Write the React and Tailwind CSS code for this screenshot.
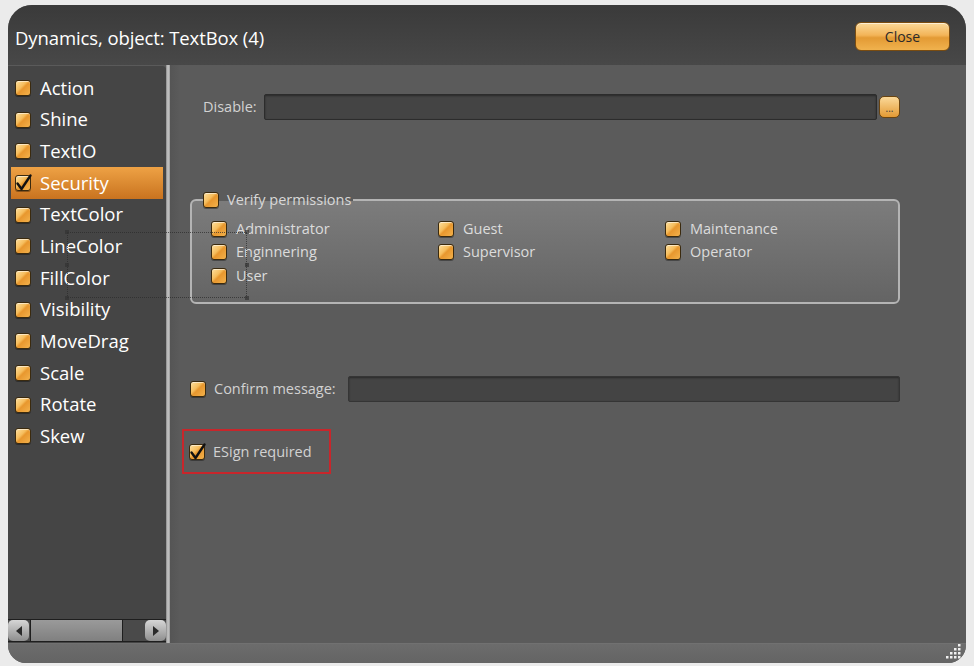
import React from 'react';

const sideItems = ['Action', 'Shine', 'TextIO', 'Security', 'TextColor', 'LineColor', 'FillColor', 'Visibility', 'MoveDrag', 'Scale', 'Rotate', 'Skew'];

const roles = ['Administrator', 'Guest', 'Maintenance', 'Enginnering', 'Supervisor', 'Operator', 'User'];

const Box = ({ checked }) => (
  <span className="relative inline-block w-[16px] h-[16px] shrink-0 rounded-[3px] border border-[#3b2a0e] bg-[linear-gradient(135deg,#fde0a0_0%,#f6bd5c_40%,#e8972e_52%,#f3b24c_100%)] shadow-[inset_0_1px_0_rgba(255,255,255,0.55),0_1px_0_rgba(0,0,0,0.35)]">
    {checked && (
      <svg className="absolute -left-[1px] -top-[3px]" width="18" height="19" viewBox="0 0 18 19">
        <path d="M2.5 10.5 L6.5 16 L15.5 2.5" fill="none" stroke="#111" strokeWidth="2.4" strokeLinecap="round" strokeLinejoin="round" />
      </svg>
    )}
  </span>
);

export default function App() {
  return (
    <div className="relative w-[974px] h-[666px] bg-[#ebebeb] pt-[5px] pl-[8px] pr-[8px] pb-[3px] font-['Open_Sans','Noto_Sans',sans-serif]">
      <div className="flex flex-col h-full rounded-[24px] rounded-b-[18px] overflow-hidden bg-[#5b5b5b]">
        {/* header */}
        <div className="h-[60px] shrink-0 flex items-center justify-between pl-[7px] pr-[16px] bg-[linear-gradient(180deg,#3a3a3a,#484848)]">
          <span className="text-white text-[18.5px] tracking-[-0.1px] mt-[5px]">Dynamics, object: TextBox (4)</span>
          <button className="w-[95px] h-[29px] mt-[3px] rounded-[6px] border border-[#7a4c10] bg-[linear-gradient(180deg,#fbd999_0%,#f3b458_45%,#e39a34_55%,#f0b24e_100%)] shadow-[inset_0_1px_0_rgba(255,255,255,0.6)] text-[14px] text-[#2a2a2a]">
            Close
          </button>
        </div>

        {/* body */}
        <div className="flex-1 flex min-h-0">
          <div className="w-[158px] shrink-0 flex flex-col bg-[#454545] border-t border-[#5a5a5a] rounded-tr-[4px]">
            <div className="flex-1 pt-[6px] px-[3px]">
              {sideItems.map((s) => (
                <div
                  key={s}
                  className={`h-[31.7px] flex items-center pl-[4px] gap-[9px] text-[18.5px] text-white ${s === 'Security' ? 'bg-[linear-gradient(180deg,#eea245,#c9731f)]' : ''}`}
                >
                  <Box checked={s === 'Security'} />
                  <span className="leading-none">{s}</span>
                </div>
              ))}
            </div>
            {/* horizontal scrollbar */}
            <div className="h-[23px] mb-[1px] flex items-stretch border-y border-[#1e1e1e] bg-[#4a4a4a]">
              <div className="w-[21px] flex items-center justify-center rounded-[5px] bg-[linear-gradient(180deg,#d6d6d6,#8e8e8e)]">
                <span className="w-0 h-0 border-y-[5px] border-y-transparent border-r-[6px] border-r-[#2a2a2a]" />
              </div>
              <div className="w-[93px] ml-[1px] bg-[linear-gradient(180deg,#9a9a9a,#808080)] border-x border-[#1e1e1e]" />
              <div className="flex-1" />
              <div className="w-[21px] flex items-center justify-center rounded-[5px] bg-[linear-gradient(180deg,#d6d6d6,#8e8e8e)]">
                <span className="w-0 h-0 border-y-[5px] border-y-transparent border-l-[6px] border-l-[#2a2a2a]" />
              </div>
            </div>
          </div>

          <div className="w-[4px] shrink-0 bg-[linear-gradient(90deg,#8a8a8a,#c8c8c8,#9a9a9a)]" />

          {/* content */}
          <div className="flex-1 flex flex-col bg-[linear-gradient(90deg,#555_0px,#5b5b5b_10px)] text-[14.5px] text-[#d2d2d2] pr-[66px]">
            <div className="mt-[29px] ml-[33px] flex items-center h-[26px]">
              <span className="mr-[7px]">Disable:</span>
              <div className="flex-1 h-[26px] rounded-[2px] bg-[#444] border border-[#2c2c2c] shadow-[inset_0_1px_2px_rgba(0,0,0,0.4)]" />
              <button className="ml-[2px] w-[21px] h-[22px] rounded-[5px] border border-[#6a4410] bg-[linear-gradient(180deg,#fbd999,#e39a34)] text-[10px] leading-none text-[#3a3a3a] flex items-end justify-center pb-[4px]">
                ...
              </button>
            </div>

            <fieldset className="mt-[69px] ml-[20px] rounded-[6px] border-2 border-[#b4b4b4] bg-[linear-gradient(180deg,#7c7c7c,#646464)] pl-[19px] pb-[15px] pt-[6px]">
              <legend className="-ml-[8px] flex items-center gap-[8px] pr-[2px]">
                <Box />
                <span className="text-[#d8d8d8]">Verify permissions</span>
              </legend>
              <div className="grid grid-cols-[227px_227px_1fr]">
                {roles.map((r) => (
                  <div key={r} className="h-[23.5px] flex items-center gap-[9px]">
                    <Box />
                    <span className="text-[#dcdcdc]">{r}</span>
                  </div>
                ))}
              </div>
            </fieldset>

            <div className="mt-[72px] ml-[20px] flex items-center h-[26px]">
              <Box />
              <span className="ml-[8px] w-[134px]">Confirm message:</span>
              <div className="flex-1 h-[26px] rounded-[2px] bg-[#444] border border-[#353535] shadow-[inset_0_1px_2px_rgba(0,0,0,0.4)]" />
            </div>

            <div className="mt-[27px] ml-[12px] w-[149px] h-[45px] border-2 border-[#c8262b] flex items-center pl-[5px] gap-[8px]">
              <Box checked />
              <span>ESign required</span>
            </div>
          </div>
        </div>

        {/* footer */}
        <div className="h-[20px] shrink-0 flex justify-end items-end pr-[4px] pb-[3px] bg-[linear-gradient(180deg,#6c6c6c,#646464)] border-t border-[#717171]">
          <svg width="16" height="16" viewBox="0 0 16 16">
            {[[12, 0], [8, 4], [12, 4], [4, 8], [8, 8], [12, 8], [0, 12], [4, 12], [8, 12], [12, 12]].map(([x, y]) => (
              <rect key={`${x}-${y}`} x={x} y={y} width="2.5" height="2.5" fill="#f0f0f0" />
            ))}
          </svg>
        </div>
      </div>

      {/* designer selection marquee left over the panel */}
      <div className="absolute left-[67px] top-[232px] w-[180px] h-[66px] border border-dotted border-[#2a2a2a]/70 pointer-events-none">
        <span className="absolute -left-[3px] -top-[3px] w-[4px] h-[4px] bg-[#333]/70" />
        <span className="absolute -right-[3px] -top-[3px] w-[4px] h-[4px] bg-[#333]/70" />
        <span className="absolute -left-[3px] -bottom-[3px] w-[4px] h-[4px] bg-[#333]/70" />
        <span className="absolute -right-[3px] -bottom-[3px] w-[4px] h-[4px] bg-[#333]/70" />
        <span className="absolute -left-[3px] top-[30px] w-[4px] h-[4px] bg-[#333]/70" />
        <span className="absolute -right-[3px] top-[30px] w-[4px] h-[4px] bg-[#333]/70" />
      </div>
    </div>
  );
}
